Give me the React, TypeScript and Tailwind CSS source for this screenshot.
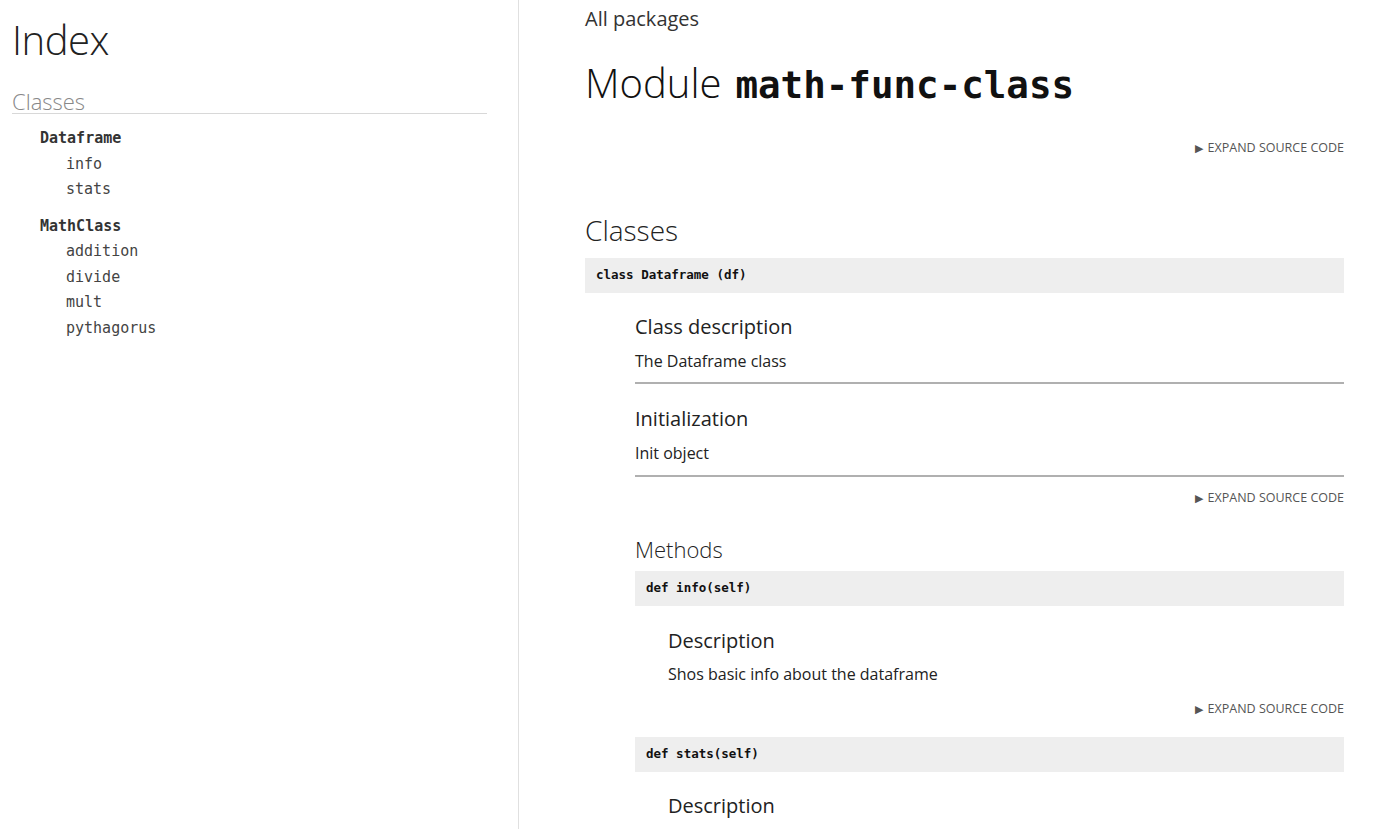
import React from "react";

const sans = "font-['Open_Sans','Noto_Sans',sans-serif]";
const mono = "font-['DejaVu_Sans_Mono','Liberation_Mono',monospace]";

function Expand({ className = "" }: { className?: string }) {
  return (
    <div className={`flex justify-end ${className}`}>
      <span className={`flex items-center gap-[5px] text-[12.5px] leading-[18px] uppercase text-[#555] ${sans}`}>
        <span className="text-[11px] leading-[18px] text-[#555]">▶</span>
        Expand source code
      </span>
    </div>
  );
}

function CodeBox({ children, className = "" }: { children: React.ReactNode; className?: string }) {
  return (
    <div className={`h-[35px] bg-[#eeeeee] flex items-center px-[11px] ${className}`}>
      <span className={`text-[12.5px] font-bold text-[#111] ${mono}`}>{children}</span>
    </div>
  );
}

export default function App() {
  const sideItem = `text-[15px] leading-[25.5px] text-[#444] ${mono}`;
  const sideHead = `text-[15px] leading-[25.5px] font-bold text-[#333] ${mono}`;
  return (
    <div className={`flex w-[1400px] h-[829px] overflow-hidden bg-white ${sans}`}>
      <aside className="w-[519px] shrink-0 border-r border-[#e0e0e0] pl-[12px] pr-[31px] pt-[16px]">
        <h1 className="text-[40px] leading-[48px] font-light text-[#222] tracking-[-0.5px]">Index</h1>
        <h2 className="mt-[25px] text-[22px] leading-[24px] font-light text-[#888] border-b border-[#d8d8d8]">
          Classes
        </h2>
        <ul className="mt-[12px] pl-[28px]">
          <li>
            <div className={sideHead}>Dataframe</div>
            <ul className="pl-[26px]">
              <li className={sideItem}>info</li>
              <li className={sideItem}>stats</li>
            </ul>
          </li>
          <li className="mt-[11px]">
            <div className={sideHead}>MathClass</div>
            <ul className="pl-[26px]">
              <li className={sideItem}>addition</li>
              <li className={sideItem}>divide</li>
              <li className={sideItem}>mult</li>
              <li className={sideItem}>pythagorus</li>
            </ul>
          </li>
        </ul>
      </aside>
      <main className="flex-1 pl-[66px] pr-[56px] pt-[5px]">
        <div className="text-[20px] leading-[28px] text-[#333]">All packages</div>
        <h1 className="mt-[26px] text-[40px] leading-[48px] font-light text-[#111] flex items-baseline gap-[14px]">
          <span>Module</span>
          <span className={`font-bold text-[37.5px] ${mono}`}>math-func-class</span>
        </h1>
        <Expand className="mt-[30px]" />
        <h2 className="mt-[56px] text-[28px] leading-[34px] font-light text-[#222]">Classes</h2>
        <CodeBox className="mt-[11px]">class Dataframe (df)</CodeBox>
        <div className="pl-[50px]">
          <div className="mt-[20px] border-b-2 border-[#b0b0b0] pb-[9px]">
            <h3 className="text-[20px] leading-[28px] text-[#222]">Class description</h3>
            <p className="mt-[8px] text-[16px] leading-[24px] text-[#222]">The Dataframe class</p>
          </div>
          <div className="mt-[21px] border-b-2 border-[#b0b0b0] pb-[10px]">
            <h3 className="text-[20px] leading-[28px] text-[#222]">Initialization</h3>
            <p className="mt-[8px] text-[16px] leading-[24px] text-[#222]">Init object</p>
          </div>
          <Expand className="mt-[12px]" />
          <h3 className="mt-[28px] text-[22px] leading-[28px] font-light text-[#222]">Methods</h3>
          <CodeBox className="mt-[8px]">def info(self)</CodeBox>
          <div className="pl-[33px]">
            <h4 className="mt-[21px] text-[20px] leading-[28px] text-[#222]">Description</h4>
            <p className="mt-[7px] text-[16px] leading-[24px] text-[#222]">Shos basic info about the dataframe</p>
          </div>
          <Expand className="mt-[14px]" />
          <CodeBox className="mt-[19px]">def stats(self)</CodeBox>
          <div className="pl-[33px]">
            <h4 className="mt-[20px] text-[20px] leading-[28px] text-[#222]">Description</h4>
          </div>
        </div>
      </main>
    </div>
  );
}
